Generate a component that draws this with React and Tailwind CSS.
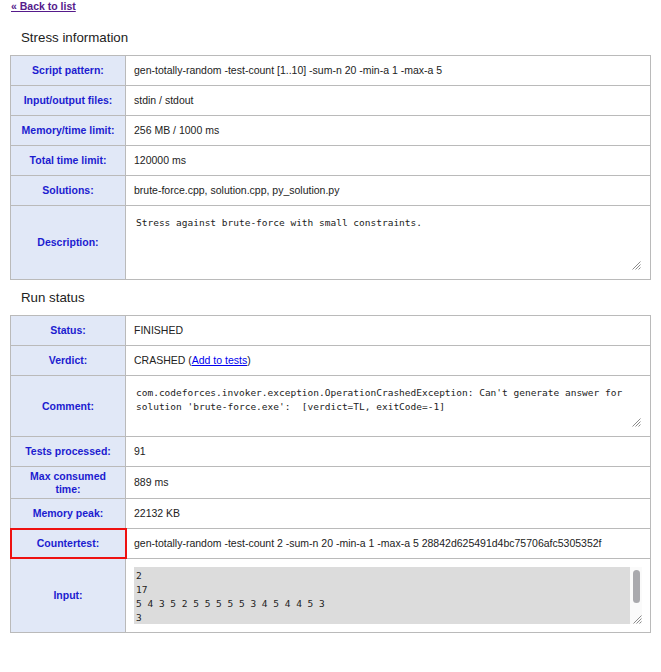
const sans = { fontFamily: '"Liberation Sans", Arial, sans-serif' };

const Grip = () => (
  <svg width="10" height="10" viewBox="0 0 10 10" className="shrink-0">
    <path d="M9.5 1.5 L1.5 9.5 M9.5 4.5 L4.5 9.5 M9.5 7.5 L7.5 9.5" stroke="#8c8c8c" strokeWidth="1" />
  </svg>
);

const Area = ({ lines, h, gray }) =>
  gray ? (
    <div className={`mt-[8px] flex w-[508px] ${h}`}>
      <div className="flex-1 overflow-hidden bg-[#dcdcdc] px-[2px] pt-[2px] font-['DejaVu_Sans_Mono',monospace] text-[9.5px] leading-[14px] text-[#222] whitespace-pre">
        {lines.map((l, i) => (
          <div key={i}>{l}</div>
        ))}
      </div>
      <div className="flex w-[12px] flex-col items-center justify-between bg-[#fafafa] pt-[3px]">
        <div className="h-[33px] w-[7px] rounded-full bg-[#a9a9ad]" />
        <div className="self-end"><Grip /></div>
      </div>
    </div>
  ) : (
    <div className={`mt-[8px] flex w-[508px] flex-col justify-between ${h}`}>
      <div className="px-[2px] pt-[2px] font-['DejaVu_Sans_Mono',monospace] text-[9.5px] leading-[14px] text-[#222] whitespace-pre">
        {lines.map((l, i) => (
          <div key={i}>{l}</div>
        ))}
      </div>
      <div className="self-end pb-[1px] pr-[1px]"><Grip /></div>
    </div>
  );

// h is the row height including its top border
const Row = ({ label, children, h = 'h-[30px]', first, mark, top }) => (
  <div className={`flex ${first ? 'h-[29px]' : h} ${first ? '' : 'border-t border-[#bababa]'}`}>
    <div
      className={`flex w-[115px] shrink-0 items-center justify-center border-r border-[#bababa] bg-[#e1e8f7] px-[8px] text-center text-[10.5px] font-bold leading-[13px] text-[#1c1cd0] ${
        mark ? 'outline-2 -outline-offset-1 outline-[#ee1111]' : ''
      }`}
    >
      {label}
    </div>
    <div className={`flex flex-1 px-[8px] text-[10.5px] text-[#222] ${top ? 'items-start' : 'items-center'}`}>
      {children}
    </div>
  </div>
);

const Heading = ({ children, pt }) => (
  <div className={`${pt} pb-[9px] pl-[11px] text-[13.3px] leading-[16px] text-[#222]`}>{children}</div>
);

export default function App() {
  return (
    <div className="min-h-[672px] bg-white px-[10px]" style={sans}>
      <div className="h-[13px] pl-[1px] text-[10.5px] font-bold leading-[13px]">
        <a href="#" className="text-[#551a8b] underline">
          « Back to list
        </a>
      </div>

      <Heading pt="pt-[17px]">Stress information</Heading>
      <div className="border border-[#bababa]">
        <Row label="Script pattern:" first>
          gen-totally-random -test-count [1..10] -sum-n 20 -min-a 1 -max-a 5
        </Row>
        <Row label="Input/output files:">stdin / stdout</Row>
        <Row label="Memory/time limit:">256 MB / 1000 ms</Row>
        <Row label="Total time limit:">120000 ms</Row>
        <Row label="Solutions:">brute-force.cpp, solution.cpp, py_solution.py</Row>
        <Row label="Description:" h="h-[74px]" top>
          <Area h="h-[57px]" lines={['Stress against brute-force with small constraints.']} />
        </Row>
      </div>

      <Heading pt="pt-[10px]">Run status</Heading>
      <div className="border border-[#bababa]">
        <Row label="Status:" first>
          FINISHED
        </Row>
        <Row label="Verdict:">
          <span>
            CRASHED (
            <a href="#" className="text-[#0000ee] underline">
              Add to tests
            </a>
            )
          </span>
        </Row>
        <Row label="Comment:" h="h-[61px]" top>
          <Area
            h="h-[44px]"
            lines={[
              "com.codeforces.invoker.exception.OperationCrashedException: Can't generate answer for",
              "solution 'brute-force.exe':  [verdict=TL, exitCode=-1]",
            ]}
          />
        </Row>
        <Row label="Tests processed:">91</Row>
        <Row label="Max consumed time:" h="h-[32px]">
          889 ms
        </Row>
        <Row label="Memory peak:">22132 KB</Row>
        <Row label="Countertest:" mark>
          gen-totally-random -test-count 2 -sum-n 20 -min-a 1 -max-a 5 28842d625491d4bc75706afc5305352f
        </Row>
        <Row label="Input:" h="h-[74px]" top>
          <Area h="h-[57px]" gray lines={['2', '17', '5 4 3 5 2 5 5 5 5 5 3 4 5 4 4 5 3', '3']} />
        </Row>
      </div>
    </div>
  );
}
